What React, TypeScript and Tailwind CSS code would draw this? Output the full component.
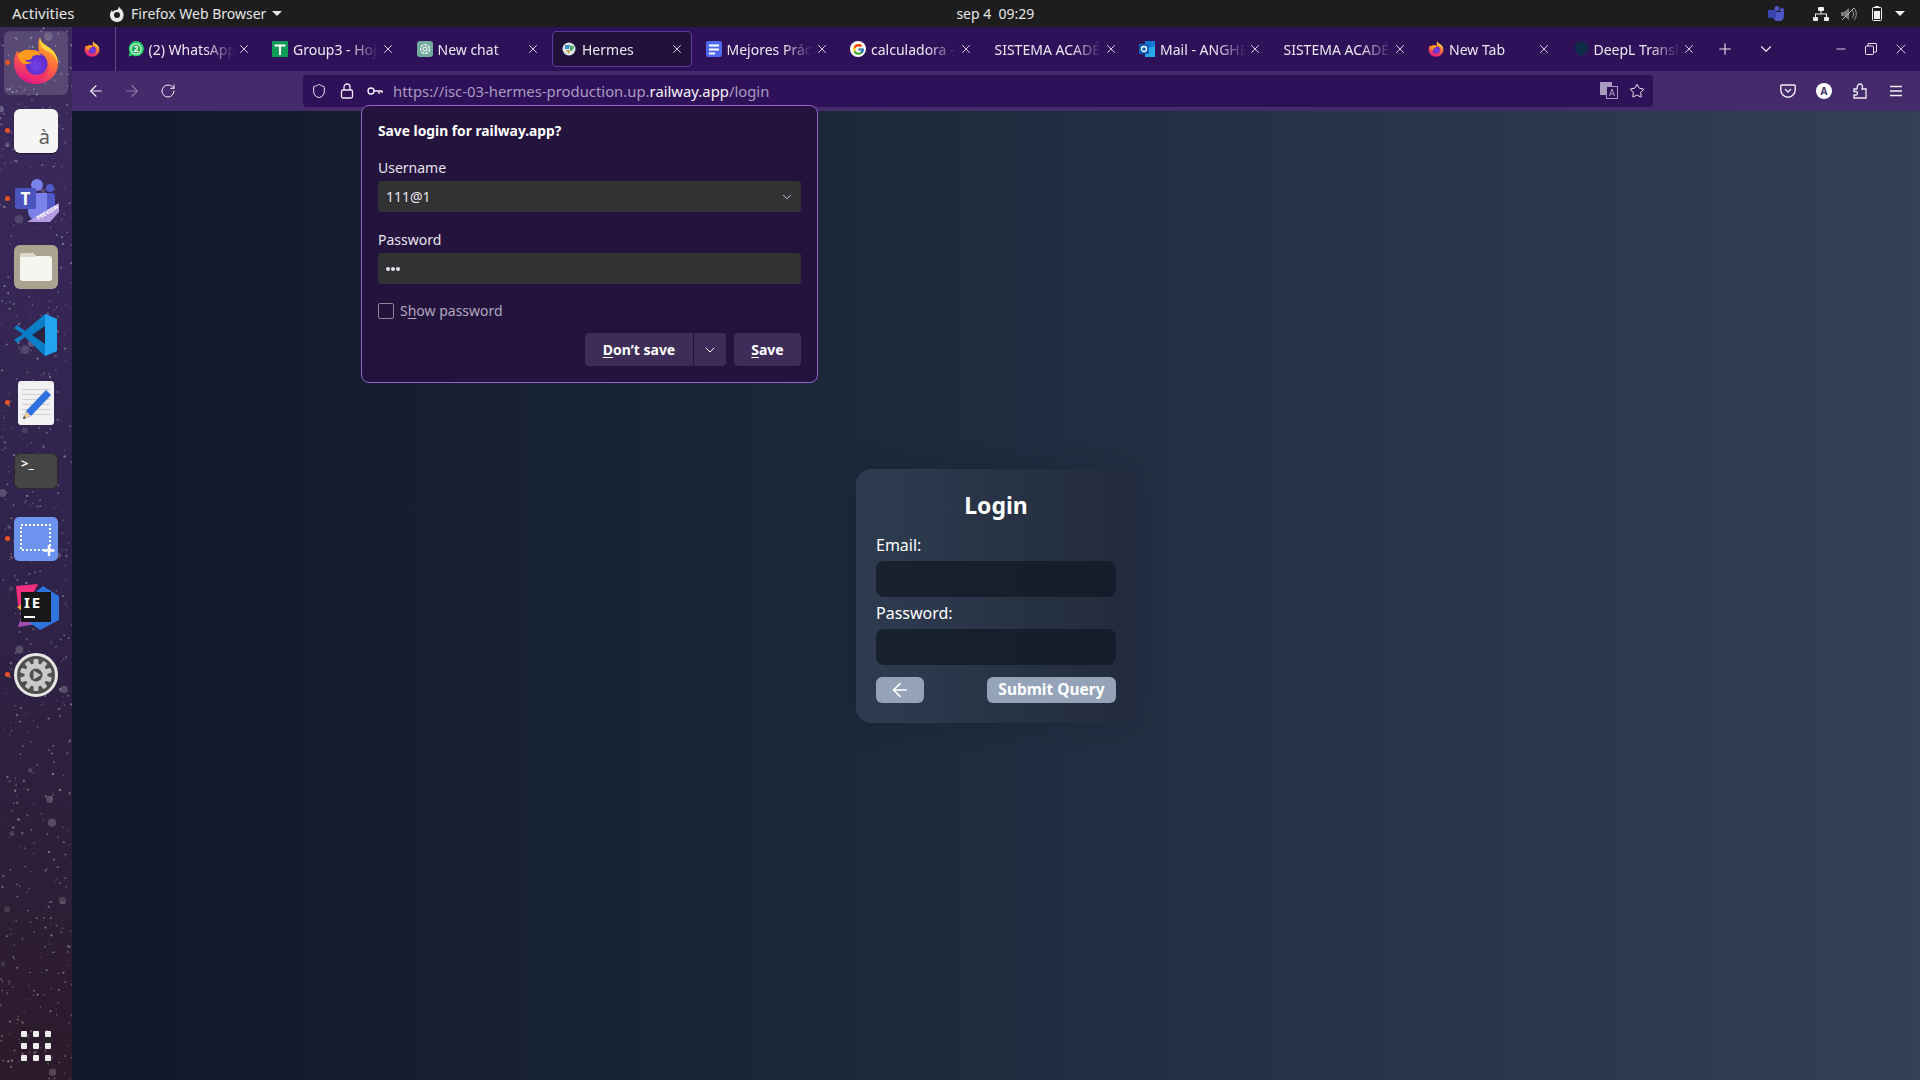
import { ArrowLeft, ArrowRight, ChevronDown, Minus, Plus, RotateCw, Shield, Star, X } from "lucide-react";
import { FcGoogle } from "react-icons/fc";
import type { ReactNode } from "react";

const FONT = "font-['Noto_Sans',sans-serif]";

function seeded(seed: number) {
  let s = seed;
  return () => {
    s = (s * 16807) % 2147483647;
    return s / 2147483647;
  };
}

const rnd = seeded(4711);
const STARS = Array.from({ length: 640 }, () => {
  const big = rnd() > 0.95;
  return { x: rnd() * 72, y: rnd() * 1053, r: big ? 2 + rnd() * 2.5 : 0.5 + rnd() * 0.7, o: big ? 0.14 + rnd() * 0.15 : 0.2 + rnd() * 0.3 };
});

function Firefox({ size = 48 }: { size?: number }) {
  return (
    <svg width={size} height={size} viewBox="0 0 48 48">
      <defs>
        <linearGradient id="ffBody" x1="0.75" y1="0" x2="0.35" y2="1">
          <stop offset="0" stopColor="#ffbd2e" />
          <stop offset="0.5" stopColor="#ff6b3a" />
          <stop offset="1" stopColor="#e31587" />
        </linearGradient>
        <radialGradient id="ffCore" cx="0.5" cy="0.6" r="0.55">
          <stop offset="0" stopColor="#7542e5" />
          <stop offset="1" stopColor="#592acb" />
        </radialGradient>
      </defs>
      <path d="M28 0C28 6 34 8 39 12 44 16 46 22 46 27 46 38 36 47 24 47 11 47 2 37 2 26 2 21 3 17 6 13 6 16 7 18 8 19 11 15 16 13 20 13 23 13 26 14 27 15 26 9 26 4 28 0z" fill="url(#ffBody)" />
      <circle cx="24.5" cy="27" r="11" fill="url(#ffCore)" />
      <path d="M28 0C28 6 34 8 39 12 44 16 46 22 46 27 44 20 40 16 35 14 31 12 27 9 28 0z" fill="#ffd43b" />
      <path d="M6 17c3-3 8-5 12-4 5 0 9 2 11 6-3-2-7-1-9 1 1 1-1 2-3 3-2 0-4 0-6-1 3 3 7 4 9 3-3 3-8 3-11 0-2-2-3-5-3-8z" fill="#ff9a1f" />
      <path d="M13 35c4 5 13 6 19 1 3-2 5-6 5-10 1 8-4 15-12 16-5 1-10-2-12-7z" fill="#f5266e" opacity="0.7" />
    </svg>
  );
}

function Teams() {
  return (
    <svg width="48" height="48" viewBox="0 0 48 48" className="overflow-visible">
      <g transform="translate(2 4)">
        <circle cx="23" cy="6" r="6" fill="#7b83eb" />
        <circle cx="36" cy="9" r="4" fill="#5059c9" />
        <rect x="29" y="14" width="12" height="17" rx="3" fill="#5059c9" />
        <path d="M14 14h19v17c0 6-4 10-10 10s-9-4-9-10z" fill="#7b83eb" />
        <rect x="1" y="9" width="21" height="21" rx="2" fill="#4b53bc" />
        <text x="11.5" y="26" textAnchor="middle" fontSize="17" fontWeight="700" fill="#fff" fontFamily="Noto Sans">T</text>
        <path d="M13 43 45 24l0 9-9 10z" fill="#b49ce4" />
        <text x="0" y="0" transform="translate(24 41) rotate(-30)" fontSize="5.5" fontWeight="700" fill="#fff" fontFamily="Noto Sans">PREVIEW</text>
      </g>
    </svg>
  );
}

function Gear() {
  return (
    <svg width="44" height="44" viewBox="0 0 44 44">
      <circle cx="22" cy="22" r="20.5" fill="#4f4f4f" stroke="#e6e6e4" strokeWidth="3" />
      {Array.from({ length: 10 }, (_, i) => (
        <rect key={i} x="19.5" y="6" width="5" height="7" rx="1" fill="#c9c9c7" transform={`rotate(${i * 36} 22 22)`} />
      ))}
      <circle cx="22" cy="22" r="11.5" fill="#c9c9c7" />
      <circle cx="22" cy="22" r="6.5" fill="#4f4f4f" />
      <path d="M19.5 17.5 27 22l-7.5 4.5z" fill="#c9c9c7" />
    </svg>
  );
}

const DOCK: { key: string; dot?: boolean; active?: boolean; icon: ReactNode }[] = [
  { key: "firefox", dot: true, active: true, icon: <div className="-translate-y-[2px]"><Firefox /></div> },
  {
    key: "char",
    dot: true,
    icon: (
      <div className="flex h-11 w-11 items-end justify-end rounded-md bg-[#f5f5f3] pb-1.5 pr-2 shadow-[0_1px_1px_rgba(0,0,0,.4)]">
        <span className="text-[20px] leading-none text-[#5b5b5b]">à</span>
      </div>
    ),
  },
  { key: "teams", dot: true, icon: <Teams /> },
  {
    key: "files",
    icon: (
      <div className="flex h-11 w-11 items-center justify-center rounded-md bg-[#aba38f]">
        <svg width="32" height="28" viewBox="0 0 32 28">
          <path d="M0 3a3 3 0 0 1 3-3h10l3 3h13a3 3 0 0 1 3 3v19a3 3 0 0 1-3 3H3a3 3 0 0 1-3-3z" fill="#f6f5f2" />
          <path d="M0 3a3 3 0 0 1 3-3h10l3 4H0z" fill="#dcd8cc" />
        </svg>
      </div>
    ),
  },
  {
    key: "vscode",
    icon: (
      <svg width="44" height="44" viewBox="0 0 44 44">
        <path d="M31 1 43 6v32l-12 5-20-19L3 30 0 27l9-6-9-6 3-3 8 6z" fill="#0a7fc7" />
        <path d="M31 1 43 6v32l-12 5z" fill="#22a5f1" />
        <path d="M31 13v18l-13-9z" fill="#2b2140" />
      </svg>
    ),
  },
  {
    key: "gedit",
    dot: true,
    icon: (
      <svg width="36" height="44" viewBox="0 0 36 44">
        <rect width="36" height="44" rx="3" fill="#f1f1f1" />
        {[8, 13, 18, 23, 28, 33].map((y) => <rect key={y} x="4" y={y} width="28" height="1" fill="#cfcfcf" />)}
        <path d="M28 9 33 14 13 35 5 38 8 30z" fill="#2f6fe0" />
        <path d="M8 30 13 35 5 38z" fill="#eecb9c" />
        <path d="M5 38 6 35 8 37z" fill="#333" />
      </svg>
    ),
  },
  {
    key: "terminal",
    icon: (
      <div className="h-9 w-11 rounded-md border border-[#2a2a2a] bg-[#454545] px-1.5 text-[13px] font-bold leading-[18px] text-white">
        {">_"}
      </div>
    ),
  },
  {
    key: "shot",
    dot: true,
    icon: (
      <svg width="44" height="44" viewBox="0 0 44 44">
        <rect width="44" height="44" rx="5" fill="#6c93ee" />
        <rect x="7" y="8" width="29" height="25" fill="none" stroke="#fff" strokeWidth="2" strokeDasharray="2 2" />
        <path d="M35 28v11M29.5 33.5h11" stroke="#fff" strokeWidth="2.5" />
      </svg>
    ),
  },
  {
    key: "idea",
    icon: (
      <div className="relative h-12 w-12">
        <svg width="48" height="48" viewBox="0 0 48 48" className="absolute inset-0">
          <path d="M4 3 26 1 14 24 6 22z" fill="#f0307e" />
          <path d="M5 24 12 19 12 30z" fill="#f59a2c" />
          <path d="M6 44 14 20 30 40z" fill="#a44fb0" />
          <path d="M31 3 47 13 47 37 28 47 18 40 18 14z" fill="#2f74dc" />
        </svg>
        <div className="absolute left-[9px] top-[9px] flex h-[30px] w-[30px] flex-col bg-[#17171a] pl-[3px] pt-[2px] text-white">
          <span className="text-[15px] font-bold leading-[16px] tracking-[2px]">IE</span>
          <span className="mt-[6px] h-[2px] w-[11px] bg-white" />
        </div>
      </div>
    ),
  },
  { key: "settings", dot: true, icon: <Gear /> },
];

function Dock() {
  return (
    <aside className="relative flex w-[72px] shrink-0 flex-col overflow-hidden bg-linear-to-b from-[#3c2a5e] via-[#30234c] to-[#2c1a2b] pt-[2px]">
      <svg width="72" height="1053" className="absolute inset-0">
        {STARS.map((s, i) => <circle key={i} cx={s.x} cy={s.y} r={s.r} fill="#d8d8d8" opacity={s.o} />)}
      </svg>
      {DOCK.map((d) => (
        <div key={d.key} className="relative flex h-[68px] items-center justify-center">
          {d.active && <div className="absolute inset-x-1 inset-y-0.5 rounded-md bg-white/15" />}
          {d.dot && <span className="absolute left-[5px] top-[31px] size-[5px] rounded-full bg-[#e95420]" />}
          <div className="relative">{d.icon}</div>
        </div>
      ))}
      <div className="relative mb-[19px] ml-[21px] mt-auto grid w-[30px] grid-cols-3 gap-[6px]">
        {Array.from({ length: 9 }, (_, i) => <span key={i} className="size-[6px] rounded-[1px] bg-[#f0f0f0]" />)}
      </div>
    </aside>
  );
}

function TopBar() {
  return (
    <header className="flex h-[27px] shrink-0 items-center bg-[#1d1d1d] text-[14px] text-[#e6e6e6]">
      <span className="ml-3 w-[97px] text-[15px]">Activities</span>
      <svg width="16" height="16" viewBox="0 0 16 16" className="mr-[6px]">
        <path d="M10 0c0 2 3 3 4 6 2 5-1 10-6 10-4 0-7-3-7-7 0-2 1-4 2-5 0 1 1 2 1 2 1-2 3-2 4-2 1-1 2-2 2-4z" fill="#e8e8e8" />
        <circle cx="8" cy="9" r="3" fill="#1d1d1d" />
      </svg>
      <span>Firefox Web Browser</span>
      <span className="ml-[6px] h-0 w-0 border-x-[5px] border-t-[5px] border-x-transparent border-t-[#e6e6e6]" />
      <span className="ml-[674px] whitespace-pre">sep 4  09:29</span>
      <div className="ml-auto flex items-center">
        <svg width="16" height="15" viewBox="0 0 16 15" className="mr-[29px]">
          <circle cx="9" cy="2.5" r="2.5" fill="#4d55c8" /><circle cx="14" cy="4" r="2" fill="#4d55c8" />
          <path d="M5 6h11v4a5 5 0 0 1-11 0z" fill="#4d55c8" /><rect y="4" width="8" height="8" rx="1" fill="#3a44b0" />
        </svg>
        <svg width="16" height="14" viewBox="0 0 16 14" className="mr-[12px]" fill="#f0f0f0">
          <rect x="5" width="6" height="4" rx="1" /><rect y="10" width="5" height="4" rx="1" /><rect x="11" y="10" width="5" height="4" rx="1" />
          <path d="M7.5 4h1v2.5H14V10h-1V7.5H3V10H2V6.5h5.5z" />
        </svg>
        <svg width="16" height="14" viewBox="0 0 16 14" className="mr-[15px]">
          <path d="M0 5h3l5-4v12l-5-4H0z" fill="#7b7b7b" />
          <path d="M11 3c2 2 2 6 0 8M13 1c3 3 3 9 0 12" stroke="#9a9a9a" fill="none" />
          <path d="M1 13 13 1" stroke="#bdbdbd" />
        </svg>
        <svg width="10" height="15" viewBox="0 0 10 15" className="mr-[13px]">
          <rect x="3" width="4" height="2" fill="#f0f0f0" /><rect x="0.5" y="1.5" width="9" height="13" rx="1" fill="none" stroke="#f0f0f0" /><rect x="2" y="5" width="6" height="8" fill="#f0f0f0" />
        </svg>
        <span className="mr-[15px] h-0 w-0 border-x-[5px] border-t-[5px] border-x-transparent border-t-[#f0f0f0]" />
      </div>
    </header>
  );
}

const FAVICONS: Record<string, ReactNode> = {
  whatsapp: (
    <svg width="16" height="16" viewBox="0 0 16 16">
      <path d="M0.5 15.5l1.2-4.200a7.5 7.5 0 1 1 3 3z" fill="#25d366" />
      <circle cx="8" cy="8" r="5.5" fill="#fff" />
      <circle cx="8" cy="8" r="4.5" fill="#18a84f" />
      <text x="8" y="11" textAnchor="middle" fontSize="8.5" fontWeight="700" fill="#fff" fontFamily="Noto Sans">2</text>
    </svg>
  ),
  sheets: (
    <svg width="16" height="16" viewBox="0 0 16 16"><rect width="16" height="16" rx="1" fill="#0f9d58" /><path d="M2.5 3.5h11v2H9V14H7V5.5H2.500z" fill="#fff" /></svg>
  ),
  chat: (
    <svg width="16" height="16" viewBox="0 0 16 16">
      <rect width="16" height="16" rx="3" fill="#74aa9c" />
      <circle cx="8" cy="8" r="4.5" fill="none" stroke="#fff" strokeWidth="1.2" strokeDasharray="3 1" />
      <circle cx="8" cy="8" r="2" fill="none" stroke="#fff" />
    </svg>
  ),
  hermes: (
    <svg width="14" height="14" viewBox="0 0 14 14">
      <circle cx="7" cy="7" r="6.5" fill="#dfe9ea" /><path d="M3 3h5l-1 4H3z" fill="#3a8dc5" /><path d="M8 4h4l-1 4-3 1z" fill="#4aa56d" /><path d="M4 8h4l-1 4z" fill="#c9a13d" />
    </svg>
  ),
  docs: (
    <svg width="16" height="16" viewBox="0 0 16 16"><rect width="16" height="16" rx="2" fill="#4f6af0" /><path d="M3 3.5h10v2H3zM3 7.5h10v2H3zM3 11.5h6v2H3z" fill="#fff" /></svg>
  ),
  google: (
    <span className="flex size-4 items-center justify-center rounded-full bg-white"><FcGoogle size={13} /></span>
  ),
  outlook: (
    <svg width="16" height="16" viewBox="0 0 16 16">
      <path d="M6 0h10v16H6z" fill="#0f78d4" /><path d="M6 8l10-3v11H6z" fill="#28a8ea" /><rect y="3" width="10" height="10" rx="1" fill="#0f5db8" />
      <circle cx="5" cy="8" r="2.5" fill="none" stroke="#fff" strokeWidth="1.3" />
    </svg>
  ),
  firefox: <Firefox size={16} />,
  deepl: (
    <svg width="16" height="16" viewBox="0 0 16 16"><path d="M8 0l7 3v7l-7 6-6-6V3z" fill="#0f2b46" /></svg>
  ),
};

const TABS = [
  { title: "(2) WhatsApp", icon: "whatsapp" },
  { title: "Group3 - Hoja de cálculo", icon: "sheets" },
  { title: "New chat", icon: "chat" },
  { title: "Hermes", icon: "hermes", active: true },
  { title: "Mejores Prácticas", icon: "docs" },
  { title: "calculadora - Google", icon: "google" },
  { title: "SISTEMA ACADÉMICO", icon: "" },
  { title: "Mail - ANGHELO", icon: "outlook" },
  { title: "SISTEMA ACADÉMICO", icon: "" },
  { title: "New Tab", icon: "firefox" },
  { title: "DeepL Translate", icon: "deepl" },
];

function TabBar() {
  return (
    <div className="flex h-[44px] shrink-0 items-center bg-[#2f1159] text-[14px] text-[#ece8f3]">
      <div className="flex h-full w-[44px] items-center border-r border-[#5d4a80] pl-[12px]"><Firefox size={16} /></div>
      <div className="ml-[2.5px] flex h-full">
        {TABS.map((t, i) => (
          <div key={i} className="flex h-full w-[144.5px] items-center pr-[4.5px]">
            <div className={`flex h-9 w-full items-center pl-[8px] pr-[7px] ${t.active ? "rounded-[4px] border border-[#5f3a9e] bg-[#22123b]" : "border border-transparent"}`}>
              {t.icon && <span className="mr-[5px] flex w-4 shrink-0 justify-center">{FAVICONS[t.icon]}</span>}
              <span className="min-w-0 flex-1 overflow-hidden whitespace-nowrap [mask-image:linear-gradient(to_right,black_calc(100%-30px),transparent)]">{t.title}</span>
              <X className="ml-[2px] size-[14px] shrink-0" strokeWidth={1.5} />
            </div>
          </div>
        ))}
      </div>
      <Plus className="ml-[8px] size-[18px]" strokeWidth={1.5} />
      <ChevronDown className="ml-[23px] size-[18px]" strokeWidth={1.5} />
      <Minus className="ml-auto size-[14px]" strokeWidth={1.5} />
      <svg width="12" height="12" viewBox="0 0 12 12" className="ml-[17px]" fill="none" stroke="#ece8f3">
        <rect x="0.5" y="3" width="8" height="8.5" rx="1" /><path d="M3 3V1a.5.5 0 0 1 .5-.5h7.5a.5.5 0 0 1 .5.5v7.5a.5.5 0 0 1-.5.5H8.5" />
      </svg>
      <X className="ml-[16px] mr-[11px] size-[16px]" strokeWidth={1.25} />
    </div>
  );
}

function NavBar() {
  return (
    <div className="flex h-10 shrink-0 items-center bg-[#452b6b] text-[#f0ecf6]">
      <ArrowLeft className="ml-[15px] size-[18px]" strokeWidth={1.5} />
      <ArrowRight className="ml-[18px] size-[18px] opacity-40" strokeWidth={1.5} />
      <RotateCw className="ml-[19px] size-[16px]" strokeWidth={1.5} />
      <div className="ml-[127px] flex h-8 w-[1350px] items-center rounded-[4px] bg-[#2f1159]">
        <Shield className="ml-[8px] size-[16px]" strokeWidth={1.5} />
        <svg width="14" height="16" viewBox="0 0 14 16" className="ml-[13px]" fill="none" stroke="#f0ecf6" strokeWidth="1.3">
          <rect x="1.5" y="7" width="11" height="8" rx="1.5" /><path d="M4 7V4a3 3 0 0 1 6 0v3" />
        </svg>
        <svg width="16" height="10" viewBox="0 0 16 10" className="ml-[13px]" fill="none" stroke="#f0ecf6" strokeWidth="1.4">
          <circle cx="4" cy="5" r="3" /><path d="M7 5h8.5M12 5v3M15 5v2" />
        </svg>
        <span className="ml-[10px] whitespace-nowrap pt-[1px] text-[14.85px] text-[#a99bc0]">
          https://isc-03-hermes-production.up.<span className="text-[#f4f1f8]">railway.app</span>/login
        </span>
        <svg width="18" height="18" viewBox="0 0 18 18" className="ml-auto">
          <rect x="0.5" y="0.5" width="11" height="12" fill="#a99bc0" stroke="#a99bc0" />
          <rect x="6.5" y="4.5" width="11" height="12" fill="#2f1159" stroke="#a99bc0" />
          <path d="M12 7l-2.5 7M12 7l2.5 7M10.5 12h3" stroke="#a99bc0" fill="none" />
        </svg>
        <Star className="ml-[11px] mr-[8px] size-[16px]" strokeWidth={1.5} />
      </div>
      <svg width="16" height="14" viewBox="0 0 16 14" className="ml-[127px]" fill="none" stroke="#f0ecf6" strokeWidth="1.4">
        <path d="M1.5 1h13a.7.7 0 0 1 .7.7V6a7 7 0 0 1-14.4 0V1.700a.7.7 0 0 1 .7-.7z" /><path d="M5 5l3 3 3-3" />
      </svg>
      <span className="ml-[20px] flex size-4 items-center justify-center rounded-full bg-white text-[10px] font-bold leading-none text-[#452b6b]">A</span>
      <svg width="14" height="16" viewBox="0 0 14 16" className="ml-[21px]" fill="none" stroke="#f0ecf6" strokeWidth="1.3">
        <path d="M1 6h3c0-2 .5-5 3-5s3 2.5 2 5h4v9H1v-3h2c2 0 2-3.5 0-3.5H1z" />
      </svg>
      <svg width="14" height="12" viewBox="0 0 14 12" className="ml-[22px]" stroke="#f0ecf6" strokeWidth="1.3">
        <path d="M1 1.5h12M1 6h12M1 10.5h12" />
      </svg>
    </div>
  );
}

function SavePopup() {
  return (
    <div className="absolute left-[361px] top-[105px] flex h-[278px] w-[457px] flex-col rounded-[8px] border border-[#9265d0] bg-[#24143d] px-4 pt-[15px] text-[14px] text-[#e8e4ef]">
      <div className="text-[13.8px] font-bold leading-5 text-white">Save login for railway.app?</div>
      <div className="mt-[17px] leading-5">Username</div>
      <div className="mt-[3px] flex h-[31px] items-center rounded-[3px] bg-[#323234] pl-2 pr-[7px]">
        111@1
        <ChevronDown className="ml-auto size-[14px]" strokeWidth={1.5} />
      </div>
      <div className="mt-[18px] leading-5">Password</div>
      <div className="mt-[3px] flex h-[31px] items-center gap-[1px] rounded-[3px] bg-[#323234] pl-2">
        <span className="size-[4px] rounded-full bg-[#e8e4ef]" /><span className="size-[4px] rounded-full bg-[#e8e4ef]" /><span className="size-[4px] rounded-full bg-[#e8e4ef]" />
      </div>
      <label className="mt-[16px] flex items-center text-[#b0a8be]">
        <span className="mr-[6px] size-4 rounded-[2px] border border-[#8d8599]" />
        S<u className="underline-offset-2">h</u>ow password
      </label>
      <div className="mt-[12px] flex justify-end font-bold text-white">
        <div className="flex h-[33px] w-[108px] items-center justify-center rounded-l-[4px] bg-[#3d2d58]"><u className="underline-offset-2">D</u>on’t save</div>
        <div className="ml-px flex h-[33px] w-[32px] items-center justify-center rounded-r-[4px] bg-[#3d2d58]"><ChevronDown className="size-[16px]" strokeWidth={1.5} /></div>
        <div className="ml-2 flex h-[33px] w-[67px] items-center justify-center rounded-[4px] bg-[#3d2d58]"><u className="underline-offset-2">S</u>ave</div>
      </div>
    </div>
  );
}

function LoginCard() {
  return (
    <form className="w-[280px] rounded-2xl bg-linear-to-r from-[#2f3c50] to-[#222b3d] p-5 text-[16px] text-white shadow-[0_0_24px_rgba(15,23,42,.25)]">
      <h2 className="text-center text-[23px] font-bold leading-8">Login</h2>
      <div className="mt-3 leading-6">Email:</div>
      <div className="mt-1 h-9 rounded-lg bg-linear-to-r from-[#1a212e] to-[#161c29]" />
      <div className="mt-1 leading-6">Password:</div>
      <div className="mt-1 h-9 rounded-lg bg-linear-to-r from-[#1a212e] to-[#161c29]" />
      <div className="mt-3 flex justify-between">
        <div className="flex h-[26px] w-[48px] items-center justify-center rounded-md bg-[#94a3b8]"><ArrowLeft className="size-[22px]" strokeWidth={1.75} /></div>
        <div className="flex h-[26px] w-[129px] items-center justify-center rounded-md bg-[#94a3b8] text-[15.5px] font-bold">Submit Query</div>
      </div>
    </form>
  );
}

export default function App() {
  return (
    <div className={`relative flex h-[1080px] w-[1920px] flex-col overflow-hidden ${FONT}`}>
      <TopBar />
      <div className="flex min-h-0 flex-1">
        <Dock />
        <div className="flex min-w-0 flex-1 flex-col">
          <TabBar />
          <NavBar />
          <main className="flex flex-1 items-center justify-center bg-linear-to-r from-[#0f172a] to-[#334155]">
            <LoginCard />
          </main>
        </div>
      </div>
      <SavePopup />
    </div>
  );
}
